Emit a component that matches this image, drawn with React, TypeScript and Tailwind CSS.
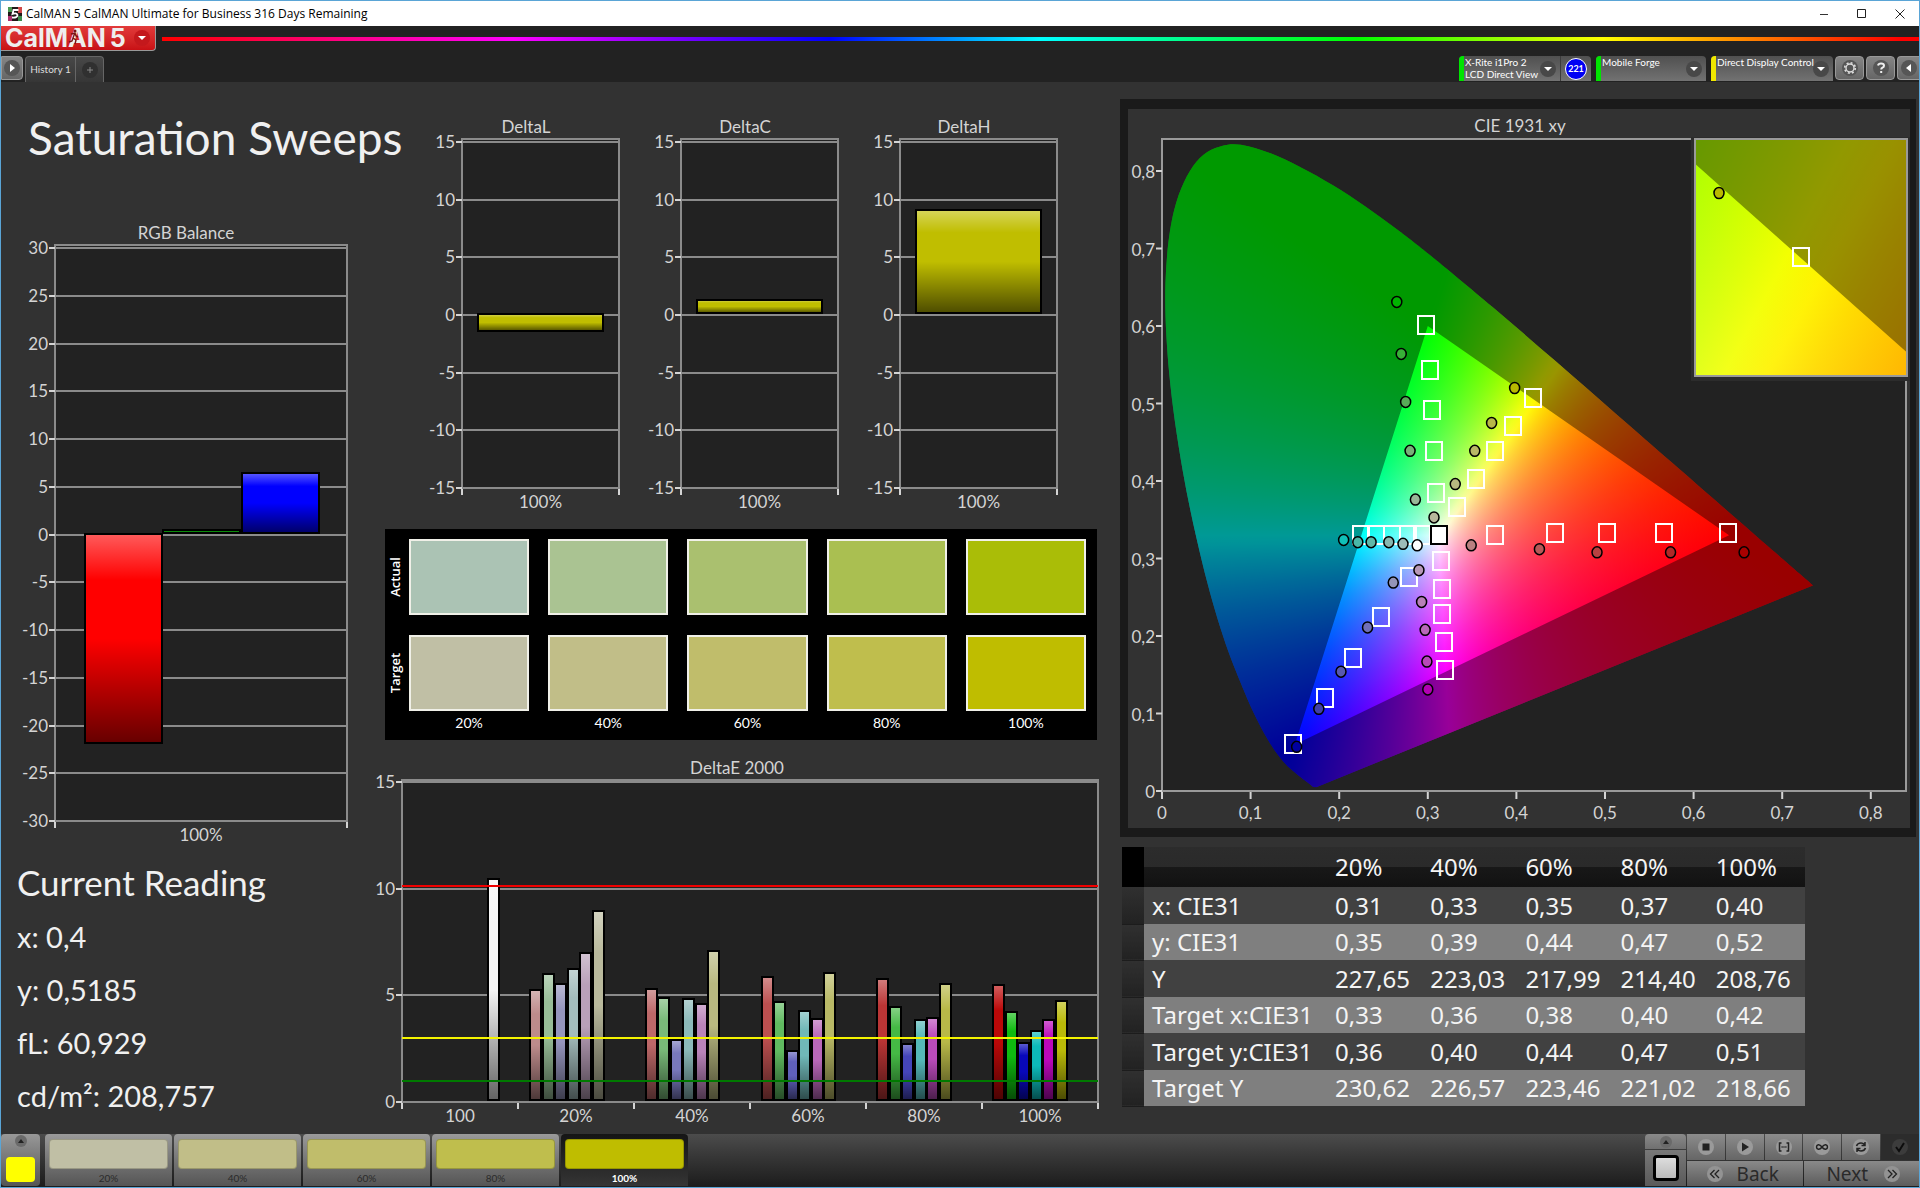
import type { ReactNode } from 'react';
import clsx from 'clsx';

type Point = [number, number];

type Bar = { x: number; width: number; value: number; color: string };

/* ---------- Measurement data ---------- */

const LEVELS = ['20%', '40%', '60%', '80%', '100%'];
const ACTUAL = ['#abc3b4', '#aac392', '#aac06f', '#aabf51', '#aabd07'];
const TARGET = ['#c0bfa5', '#c1be88', '#c0bd6b', '#bfbe4d', '#bfbd00'];

const READINGS = ['x: 0,4', 'y: 0,5185', 'fL: 60,929', 'cd/m²: 208,757'];

const TABLE_ROWS = [
  ['x: CIE31', '0,31', '0,33', '0,35', '0,37', '0,40'],
  ['y: CIE31', '0,35', '0,39', '0,44', '0,47', '0,52'],
  ['Y', '227,65', '223,03', '217,99', '214,40', '208,76'],
  ['Target x:CIE31', '0,33', '0,36', '0,38', '0,40', '0,42'],
  ['Target y:CIE31', '0,36', '0,40', '0,44', '0,47', '0,51'],
  ['Target Y', '230,62', '226,57', '223,46', '221,02', '218,66'],
];

const DELTA_E = [
  { values: [5.2, 5.95, 5.5, 6.2, 6.95, 8.9], colors: ['#bd8b8b', '#97bd97', '#9595bd', '#a3bcbc', '#b9a0b9', '#b9b99c'] },
  { values: [5.25, 4.85, 2.85, 4.8, 4.55, 7.05], colors: ['#bd6868', '#79ba79', '#7878bb', '#8cbaba', '#b983b9', '#b8b880'] },
  { values: [5.8, 4.65, 2.35, 4.2, 3.85, 6], colors: ['#bc4f4f', '#60ba60', '#6060bb', '#70b8b8', '#ba68ba', '#b9b966'] },
  { values: [5.7, 4.4, 2.65, 3.8, 3.9, 5.5], colors: ['#bb3535', '#45b945', '#4545ba', '#55b8b8', '#ba4bba', '#b8b848'] },
  { values: [5.45, 4.15, 2.7, 3.3, 3.8, 4.7], colors: ['#bb0808', '#0fba0f', '#0808ba', '#0dbaba', '#ba08ba', '#b9b908'] },
];

const TARGET_POINTS: Point[] = [
  [0.298, 0.601], [0.302, 0.543], [0.305, 0.492], [0.307, 0.439], [0.309, 0.385],
  [0.419, 0.507], [0.396, 0.471], [0.376, 0.439], [0.354, 0.403], [0.333, 0.366],
  [0.376, 0.33], [0.444, 0.333], [0.502, 0.333], [0.567, 0.333], [0.639, 0.333],
  [0.225, 0.33], [0.242, 0.33], [0.26, 0.33], [0.278, 0.33], [0.294, 0.33],
  [0.315, 0.297], [0.316, 0.261], [0.316, 0.228], [0.318, 0.192], [0.319, 0.156],
  [0.279, 0.276], [0.247, 0.225], [0.216, 0.172], [0.184, 0.12], [0.148, 0.061],
];

const MEASURED_POINTS: { points: Point[]; colors: string[] }[] = [
  { points: [[0.265, 0.631], [0.27, 0.564], [0.275, 0.502], [0.28, 0.439], [0.286, 0.376]], colors: ['#00b400', '#38b038', '#58ac58', '#78b078', '#98b898'] },
  { points: [[0.398, 0.52], [0.372, 0.475], [0.353, 0.439], [0.331, 0.396], [0.307, 0.353]], colors: ['#b9b900', '#b8b848', '#b8b866', '#b8b880', '#b8b89c'] },
  { points: [[0.205, 0.324], [0.221, 0.321], [0.236, 0.321], [0.256, 0.321], [0.272, 0.319]], colors: ['#10c0b8', '#48b8a8', '#60b8a8', '#88b8b0', '#9cbcb8'] },
  { points: [[0.288, 0.317]], colors: ['#ffffff'] },
  { points: [[0.349, 0.317], [0.426, 0.312], [0.491, 0.308], [0.574, 0.308], [0.657, 0.308]], colors: ['#b98080', '#b85858', '#b84040', '#b02828', '#a80000'] },
  { points: [[0.29, 0.285], [0.293, 0.244], [0.297, 0.208], [0.299, 0.167], [0.3, 0.131]], colors: ['#b898b8', '#b880b8', '#b868b8', '#b848b8', '#b400b4'] },
  { points: [[0.261, 0.269], [0.232, 0.211], [0.202, 0.154], [0.177, 0.106], [0.152, 0.057]], colors: ['#9494b8', '#7070b8', '#5858b0', '#4040a8', '#0000a0'] },
];

/* ---------- Chromaticity diagram maths ---------- */

const PRIMARIES: Point[] = [[0.64, 0.33], [0.3, 0.6], [0.15, 0.06]];

// Spectral locus, 380 - 700 nm
const LOCUS: Point[] = [
  [0.1741, 0.005], [0.1714, 0.0051], [0.1689, 0.0069], [0.1644, 0.0109], [0.1566, 0.0177],
  [0.144, 0.0297], [0.1355, 0.0399], [0.1241, 0.0578], [0.1096, 0.0868], [0.0913, 0.1327],
  [0.0687, 0.2007], [0.0454, 0.295], [0.0235, 0.4127], [0.0082, 0.5384], [0.0039, 0.6548],
  [0.0139, 0.7502], [0.0389, 0.812], [0.0743, 0.8338], [0.1142, 0.8262], [0.1547, 0.8059],
  [0.1929, 0.7816], [0.2296, 0.7543], [0.2658, 0.7243], [0.3016, 0.6923], [0.3731, 0.6245],
  [0.4441, 0.5547], [0.5125, 0.4866], [0.5752, 0.4242], [0.627, 0.3725], [0.6658, 0.334],
  [0.6915, 0.3083], [0.719, 0.2809], [0.7347, 0.2653],
];

const toLinearRgb = (x: number, y: number) => {
  const z = 1 - x - y;
  return [
    3.2406 * x - 1.5372 * y - 0.4986 * z,
    -0.9689 * x + 1.8758 * y + 0.0415 * z,
    0.0557 * x - 0.204 * y + 1.057 * z,
  ];
};

const channel = (a: number, b: number) => {
  if (a <= 0) return 0;
  if (b <= 0 || a >= b) return 255;
  return Math.round((255 * a) / b);
};

// The ratio of two channels is constant along any ray that leaves the third primary,
// so three conic gradients blended with "darken" give the full colour field.
function gamutBackground(px: (x: number) => number, py: (y: number) => number) {
  const sx = px(1) - px(0);
  const sy = py(0) - py(1);
  return PRIMARIES.map(([vx, vy], vertex) => {
    const i = (vertex + 1) % 3;
    const j = (vertex + 2) % 3;
    const stops: string[] = [];
    for (let deg = 0; deg <= 360; deg += 1) {
      const a = (deg * Math.PI) / 180;
      const rgb = toLinearRgb(vx + (Math.sin(a) / sx) * 10, vy + (Math.cos(a) / sy) * 10);
      const out = [255, 255, 255];
      out[i] = channel(rgb[i], rgb[j]);
      out[j] = channel(rgb[j], rgb[i]);
      stops.push(`rgb(${out.join(',')}) ${deg}deg`);
    }
    return `conic-gradient(at ${px(vx)}px ${py(vy)}px, ${stops.join(',')})`;
  }).join(',');
}

function smoothPath(points: Point[]) {
  let d = `M${points[0].join(' ')}`;
  for (let i = 0; i < points.length - 1; i++) {
    const p0 = points[Math.max(i - 1, 0)];
    const p1 = points[i];
    const p2 = points[i + 1];
    const p3 = points[Math.min(i + 2, points.length - 1)];
    d += `C${p1[0] + (p2[0] - p0[0]) / 6} ${p1[1] + (p2[1] - p0[1]) / 6} ${p2[0] - (p3[0] - p1[0]) / 6} ${p2[1] - (p3[1] - p1[1]) / 6} ${p2[0]} ${p2[1]}`;
  }
  return d + 'Z';
}

/* ---------- Charts ---------- */

type BarChartProps = {
  id: string;
  title: string;
  titleX: number;
  width: number;
  height: number;
  plot: { x: number; y: number; w: number; h: number };
  max: number;
  min: number;
  categories: string[];
  bars: Bar[];
  limits?: { value: number; color: string }[];
  headroom?: number;
};

function BarChart({ id, title, titleX, width, height, plot, max, min, categories, bars, limits = [], headroom = 3 }: BarChartProps) {
  const toY = (v: number) => Math.round(plot.y + ((max - v) / (max - min)) * plot.h);
  const ticks: number[] = [];
  for (let v = max; v >= min; v -= 5) ticks.push(v);
  const step = plot.w / categories.length;
  const zero = toY(0);

  return (
    <svg viewBox={`0 0 ${width} ${height}`} className="block w-full h-auto text-[17px]" role="img" aria-label={title}>
      <defs>
        <linearGradient id={id} x1="0" y1="0" x2="0" y2="1">
          <stop offset="0" stopColor="#fff" stopOpacity="0.36" />
          <stop offset="0.22" stopColor="#fff" stopOpacity="0" />
          <stop offset="0.5" stopColor="#000" stopOpacity="0" />
          <stop offset="1" stopColor="#000" stopOpacity="0.6" />
        </linearGradient>
      </defs>
      <text x={titleX} y={plot.y - headroom - 6} textAnchor="middle" fill="#d4d4d4">{title}</text>
      <rect x={plot.x} y={plot.y - headroom} width={plot.w} height={plot.h + headroom} fill="#222" stroke="#8b8b8b" strokeWidth="2" />
      {ticks.map((v) => (
        <g key={v}>
          <path d={`M${plot.x} ${toY(v)}H${plot.x + plot.w}`} stroke="#8b8b8b" strokeWidth="2" />
          <path d={`M${plot.x - 6} ${toY(v)}h6`} stroke="#d4d4d4" strokeWidth="2" />
          <text x={plot.x - 7} y={toY(v) + 6} textAnchor="end" fill="#d4d4d4">{v}</text>
        </g>
      ))}
      {bars.map((bar) => {
        const top = Math.min(toY(bar.value), zero) - 1;
        const h = Math.max(Math.abs(toY(bar.value) - zero), 3) - 1;
        return (
          <g key={bar.x}>
            <rect x={bar.x} y={top} width={bar.width} height={h} fill={bar.color} />
            <rect x={bar.x} y={top} width={bar.width} height={h} fill={`url(#${id})`} stroke="#000" strokeWidth="2" />
          </g>
        );
      })}
      {limits.map((limit) => (
        <path key={limit.value} d={`M${plot.x} ${toY(limit.value)}h${plot.w}`} stroke={limit.color} strokeWidth="2" />
      ))}
      {categories.map((c, i) => (
        <text key={c + i} x={plot.x + step * (i + 0.5)} y={plot.y + plot.h + 20} textAnchor="middle" fill="#d4d4d4">{c}</text>
      ))}
      {Array.from({ length: categories.length + 1 }, (_, i) => (
        <path key={i} d={`M${plot.x + step * i} ${plot.y + plot.h + 1}v6`} stroke="#d4d4d4" strokeWidth="2" />
      ))}
    </svg>
  );
}

function GamutField({ px, py, width, height }: { px: (x: number) => number; py: (y: number) => number; width: number; height: number }) {
  return (
    <foreignObject x="0" y="0" width={width} height={height}>
      <div className="w-full h-full bg-blend-darken" style={{ backgroundImage: gamutBackground(px, py) }} />
    </foreignObject>
  );
}

function CieChart() {
  const px = (x: number) => 34 + x * 886;
  const py = (y: number) => 682 - y * 775;
  const locus = smoothPath(LOCUS.map(([x, y]): Point => [px(x), py(y)]));
  const triangle = 'M' + PRIMARIES.map(([x, y]) => `${px(x)} ${py(y)}`).join('L') + 'Z';

  // Magnified view around the selected target
  const zx = (x: number) => 106 + (x - 0.4193) * 4080;
  const zy = (y: number) => 119 - (y - 0.5053) * 4577;
  const zoomTriangle = 'M' + PRIMARIES.map(([x, y]) => `${zx(x)} ${zy(y)}`).join('L') + 'Z';

  return (
    <svg viewBox="0 0 782 719" className="block w-full h-auto bg-[#323232] text-[17px]" role="img" aria-label="CIE 1931 xy">
      <defs>
        <clipPath id="locus">
          <path d={locus} />
        </clipPath>
      </defs>
      <text x="392" y="23" textAnchor="middle" fill="#d4d4d4">CIE 1931 xy</text>
      <rect x="34" y="30" width="744" height="652" fill="#222" stroke="#9a9a9a" strokeWidth="2" />
      <g clipPath="url(#locus)">
        <GamutField px={px} py={py} width={782} height={719} />
        <path d={`M0 0H782V719H0Z${triangle}`} fillRule="evenodd" fill="#000" fillOpacity="0.4" />
      </g>
      {TARGET_POINTS.map(([x, y]) => (
        <rect key={`${x}-${y}`} x={Math.round(px(x)) - 8} y={Math.round(py(y)) - 9} width="16" height="18" fill="none" stroke="#fff" strokeWidth="2" />
      ))}
      <rect x="303" y="417" width="16" height="18" fill="#fff" stroke="#000" strokeWidth="2" />
      {MEASURED_POINTS.map(({ points, colors }) =>
        points.map(([x, y], i) => (
          <ellipse key={`${x}-${y}`} cx={px(x)} cy={py(y)} rx="5" ry="5.5" fill={colors[i]} stroke="#000" strokeWidth="1.5" />
        ))
      )}
      {[0, 1, 2, 3, 4, 5, 6, 7, 8].map((n) => {
        const label = n === 0 ? '0' : `0,${n}`;
        return (
          <g key={n} fill="#d4d4d4">
            <path d={`M28 ${py(n / 10)}h6M${px(n / 10)} 683v7`} stroke="#d4d4d4" strokeWidth="2" />
            <text x="27" y={py(n / 10) + 7} textAnchor="end">{label}</text>
            <text x={px(n / 10)} y="710" textAnchor="middle">{label}</text>
          </g>
        );
      })}
      <rect x="563" y="28" width="219" height="244" fill="#2c2c2c" />
      <svg x="567" y="30" width="212" height="237" viewBox="0 0 212 237">
        <GamutField px={zx} py={zy} width={212} height={238} />
        <path d={`M0 0H212V238H0Z${zoomTriangle}`} fillRule="evenodd" fill="#000" fillOpacity="0.4" />
        <rect x="98" y="109" width="16" height="18" fill="none" stroke="#fff" strokeWidth="2" />
        <ellipse cx="24" cy="54" rx="5" ry="5.5" fill="#b9b900" stroke="#000" strokeWidth="1.5" />
      </svg>
      <rect x="567" y="30" width="212" height="237" fill="none" stroke="#9a9a9a" strokeWidth="2" />
    </svg>
  );
}

/* ---------- Window chrome ---------- */

function TitleBar() {
  return (
    <header className="flex h-[25px] items-center bg-white pl-[7px] text-black">
      <svg viewBox="0 0 14 14" className="h-[14px] w-[14px]">
        <path d="M0 0h14v14H0z" fill="#201818" />
        <path d="M0 0h4v5H0z" fill="#4a9a50" />
        <path d="M10 0h4v6h-4z" fill="#d04848" />
        <path d="M0 9h4v5H0z" fill="#b03070" />
        <path d="M10 9h4v5h-4z" fill="#3c8c4c" />
        <path d="M10.500 3H5.500L4.500 7Q8.500 5.500 9.500 8Q9.500 11 4 10.500" fill="none" stroke="#fff" strokeWidth="1.800" />
      </svg>
      <h1 className="ml-[4px] font-['Open_Sans',sans-serif] text-[12px] leading-4">
        CalMAN 5 CalMAN Ultimate for Business 316 Days Remaining
      </h1>
      <div className="ml-auto flex">
        <button aria-label="Minimize" className="flex h-6 w-[38px] items-center justify-center">
          <svg viewBox="0 0 10 10" className="h-[10px] w-[10px]"><path d="M1 5.500h8" stroke="#333" /></svg>
        </button>
        <button aria-label="Maximize" className="flex h-6 w-[38px] items-center justify-center">
          <svg viewBox="0 0 10 10" className="h-[10px] w-[10px]"><path d="M.5 .5h8v8h-8z" fill="none" stroke="#222" /></svg>
        </button>
        <button aria-label="Close" className="flex h-6 w-[38px] items-center justify-center">
          <svg viewBox="0 0 10 10" className="h-[10px] w-[10px]"><path d="M.5 .5l9 9M9.500 .5l-9 9" stroke="#222" /></svg>
        </button>
      </div>
    </header>
  );
}

function RoundIcon({ children, className }: { children: ReactNode; className?: string }) {
  return (
    <span className={clsx('flex h-4 w-4 shrink-0 items-center justify-center rounded-full', className)}>
      <svg viewBox="0 0 16 16" className="h-4 w-4">{children}</svg>
    </span>
  );
}

const DOWN = <path d="M4 6h8l-4 4z" fill="#fff" />;

function DeviceButton({ color, lines, className }: { color: string; lines: string[]; className?: string }) {
  return (
    <button aria-haspopup="menu" className={clsx('flex h-[25px] items-center overflow-hidden bg-linear-to-b from-[#505050] to-[#727272] text-left', className)}>
      <span className={clsx('h-full w-[5px] shrink-0', color)} />
      <span className="ml-px h-full min-w-0 flex-1 whitespace-nowrap text-[10px] leading-3 text-white">
        {lines.map((line) => <span key={line} className="block">{line}</span>)}
      </span>
      <RoundIcon className="mr-1 bg-[#484848]">{DOWN}</RoundIcon>
    </button>
  );
}

function SquareButton({ label, children, className }: { label: string; children: ReactNode; className?: string }) {
  return (
    <button aria-label={label} className={clsx('flex h-6 items-center justify-center border border-[#999] bg-linear-to-b from-[#858585] to-[#666]', className)}>
      <RoundIcon className="bg-[#565656]">{children}</RoundIcon>
    </button>
  );
}

function AppHeader() {
  return (
    <div className="flex h-14 flex-col justify-between bg-[#222]">
      <div className="flex items-start">
        <button aria-label="Main menu" className="relative flex h-[25px] w-[155px] shrink-0 items-center rounded-br-sm border-r border-b border-[#999] bg-linear-to-b from-[#e23a3a] to-[#c80f14] pl-1">
          <span className="font-['Inter',sans-serif] text-[25px] font-bold leading-6 text-[#eee]">CalMAN</span>
          <span className="ml-1 font-['Inter',sans-serif] text-[25px] font-bold leading-6 text-[#eee]">5</span>
          <svg viewBox="0 0 12 18" className="absolute left-[67px] top-[2px] h-[18px] w-3">
            <circle cx="7" cy="3" r="1.500" fill="#7a1414" />
            <path d="M3 6l4-1 1 3 2 1M6.500 6L5 10l3 2-1 4M5 10l-1 3-3 1" fill="none" stroke="#7a1414" strokeWidth="1.400" />
          </svg>
          <RoundIcon className="mr-[5px] ml-auto bg-[#c4181c]">{DOWN}</RoundIcon>
        </button>
        <div className="mt-[11px] ml-[6px] h-1 flex-1 bg-[linear-gradient(90deg,#f00_0%,#f0f_20%,#00f_38%,#0ff_50%,#0f0_68%,#ff0_82%,#f00_99%)]" />
      </div>
      <div className="flex items-start justify-between">
        <div className="flex">
          <SquareButton label="Show panel" className="w-[22px] rounded-r-sm">
            <path d="M6 4v8l5-4z" fill="#fff" />
          </SquareButton>
          <div className="ml-[2px] flex h-[26px] items-center rounded-t-sm border border-b-0 border-[#666] bg-linear-to-b from-[#484848] to-[#363636]">
            <button className="h-full w-[49px] text-center text-[10px] text-[#ddd]">History 1</button>
            <button aria-label="Add history" className="flex h-full w-7 items-center justify-center border-l border-[#666]">
              <RoundIcon className="bg-[#303030]"><path d="M8 5v6M5 8h6" stroke="#888" /></RoundIcon>
            </button>
          </div>
        </div>
        <div className="flex">
          <DeviceButton color="bg-[#00e400]" lines={['X-Rite i1Pro 2', 'LCD Direct View']} className="w-[101px] rounded-tl-sm" />
          <button className="mr-[5px] flex h-[25px] w-[31px] items-center justify-center rounded-tr-sm border-l border-[#3c3c3c] bg-linear-to-b from-[#505050] to-[#727272]">
            <span className="flex h-[22px] w-[22px] items-center justify-center rounded-full border border-white bg-[#0000f4] text-[9px] font-bold text-white">221</span>
          </button>
          <DeviceButton color="bg-[#00e400]" lines={['Mobile Forge']} className="mr-[5px] w-[110px] rounded-t-sm" />
          <DeviceButton color="bg-[#f0e800]" lines={['Direct Display Control']} className="mr-[2px] w-[122px] rounded-t-sm" />
          <SquareButton label="Settings" className="mr-[2px] w-[29px] rounded-sm">
            <circle cx="8" cy="8" r="4" fill="none" stroke="#ddd" strokeWidth="1.400" />
            <circle cx="8" cy="8" r="5.300" fill="none" stroke="#ddd" strokeWidth="1.600" strokeDasharray="2 2.160" />
          </SquareButton>
          <SquareButton label="Help" className="mr-[2px] w-[29px] rounded-sm">
            <path d="M5 5.500Q5.500 3.500 8 3.500Q11 3.500 11 5.700Q11 7 9.500 7.700Q8.200 8.300 8.200 9.500M8.200 11v2" fill="none" stroke="#eee" strokeWidth="2" />
          </SquareButton>
          <SquareButton label="Collapse" className="w-[22px] rounded-l-sm border-r-0">
            <path d="M10 4v8L5 8z" fill="#fff" />
          </SquareButton>
        </div>
      </div>
    </div>
  );
}

/* ---------- Panels ---------- */

function SwatchRow({ label, colors }: { label: string; colors: string[] }) {
  return (
    <div className="flex">
      <div className="flex w-6 items-center justify-center pr-1">
        <span className="-rotate-90 font-['Open_Sans',sans-serif] text-[13px] font-semibold leading-4 text-white">{label}</span>
      </div>
      <div className="grid flex-1 grid-cols-5 gap-[19px]">
        {colors.map((c) => <div key={c} className="h-[76px] border-2 border-[#f0f0e8]" style={{ backgroundColor: c }} />)}
      </div>
    </div>
  );
}

function Swatches() {
  return (
    <section className="mt-[11px] mr-[13px] ml-[15px] flex h-[211px] flex-col gap-5 bg-black pt-[10px] pr-[11px]">
      <SwatchRow label="Actual" colors={ACTUAL} />
      <div>
        <SwatchRow label="Target" colors={TARGET} />
        <div className="grid grid-cols-5 gap-[19px] pt-[2px] pl-6 text-center text-[14px] leading-5 text-white">
          {LEVELS.map((l) => <span key={l}>{l}</span>)}
        </div>
      </div>
    </section>
  );
}

function ResultsTable() {
  return (
    <table className="w-full table-fixed border-collapse text-left font-['Noto_Sans',sans-serif] text-[24px] leading-7 text-[#f4f4f4]">
      <colgroup>
        <col className="w-[22px]" />
        <col className="w-[185px]" />
        {LEVELS.map((l) => <col key={l} />)}
      </colgroup>
      <thead>
        <tr className="h-10 bg-[linear-gradient(#2c2c2c_0%,#2a2a2a_50%,#181818_50%,#121212_100%)]">
          <td className="bg-black" />
          <td />
          {LEVELS.map((l) => <th key={l} scope="col" className="pl-[6px] font-normal">{l}</th>)}
        </tr>
      </thead>
      <tbody>
        {TABLE_ROWS.map(([name, ...values], i) => (
          <tr key={name} className={clsx(i % 2 ? 'h-9 bg-[#7f7f7f]' : 'h-[37px] bg-[#414141]')}>
            <td className="border-b border-[#1c1c1c] bg-linear-to-b from-[#303030] to-[#222]" />
            <th scope="row" className="whitespace-nowrap pl-2 font-normal">{name}</th>
            {values.map((v, n) => <td key={n} className="pl-[6px]">{v}</td>)}
          </tr>
        ))}
      </tbody>
    </table>
  );
}

function UpArrow() {
  return (
    <span className="flex h-3 w-3 items-center justify-center rounded-full bg-[#6a6a6a]">
      <svg viewBox="0 0 12 12" className="h-3 w-3"><path d="M3 8h6L6 4z" fill="#222" /></svg>
    </span>
  );
}

const TRANSPORT: { label: string; icon: ReactNode }[] = [
  { label: 'Stop', icon: <path d="M4.500 4.500h7v7h-7z" fill="#222" /> },
  { label: 'Play', icon: <path d="M5 3.500v9l7-4.500z" fill="#222" /> },
  { label: 'Read series', icon: <path d="M5.500 4H3.500v8h2M10.500 4h2v8h-2M5.500 8h1.200M7.400 8h1.200M9.300 8h1.200" fill="none" stroke="#222" strokeWidth="1.500" /> },
  { label: 'Read continuously', icon: <path d="M8 8Q6 5.500 4.300 5.800Q2.500 6.200 2.500 8Q2.500 9.800 4.300 10.200Q6 10.500 8 8Q10 5.500 11.700 5.800Q13.500 6.200 13.500 8Q13.500 9.800 11.700 10.200Q10 10.500 8 8Z" fill="none" stroke="#222" strokeWidth="1.500" /> },
  { label: 'Refresh', icon: <path d="M3.500 7Q4.500 4 8 4Q10 4 11.500 5.500M12 3v3.500H8.500M12.500 9Q11.500 12 8 12Q6 12 4.500 10.500M4 13V9.500h3.500" fill="none" stroke="#222" strokeWidth="1.500" /> },
];

function BottomBar() {
  return (
    <footer className="flex h-[53px] items-stretch justify-between bg-linear-to-b from-[#4c4c4c] to-[#1c1c1c] pb-px">
      <div className="flex">
        <button aria-label="Current colour" className="mr-[5px] flex w-[39px] flex-col items-center rounded-sm bg-linear-to-b from-[#989898] to-[#555] pt-px">
          <UpArrow />
          <span className="mt-[10px] h-[25px] w-[29px] rounded-sm bg-[#ff0]" />
        </button>
        <div className="flex gap-[2px]">
          {LEVELS.map((level, i) => {
            const active = i === LEVELS.length - 1;
            return (
              <button
                key={level}
                className={clsx(
                  'flex w-[127px] flex-col items-center rounded-t-sm px-1 pt-[5px] text-[10px] leading-4',
                  active ? 'bg-linear-to-b from-[#151515] to-[#353535] font-bold text-white' : 'bg-linear-to-b from-[#9a9a9a] to-[#555] text-[#2a2a2a]'
                )}
              >
                <span className="mb-px h-[30px] w-full rounded-sm border border-black/20" style={{ backgroundColor: TARGET[i] }} />
                {level}
              </button>
            );
          })}
        </div>
      </div>
      <div className="flex gap-px text-[#2a2a2a]">
        <div className="flex w-[41px] flex-col gap-px">
          <button aria-label="Expand" className="flex h-[15px] items-center justify-center rounded-t-sm bg-linear-to-b from-[#8a8a8a] to-[#707070]"><UpArrow /></button>
          <button aria-label="Pattern window" className="flex flex-1 items-center justify-center bg-linear-to-b from-[#787878] to-[#5a5a5a]">
            <span className="h-[26px] w-[26px] rounded-sm border-3 border-black bg-linear-to-b from-[#ddd] to-[#bbb]" />
          </button>
        </div>
        <div className="flex w-[232px] flex-col gap-px">
          <div className="grid h-[26px] grid-cols-6 gap-px">
            {TRANSPORT.map(({ label, icon }) => (
              <button key={label} aria-label={label} className="flex items-center justify-center bg-linear-to-b from-[#8c8c8c] to-[#666]">
                <RoundIcon className="bg-[#9a9a9a]">{icon}</RoundIcon>
              </button>
            ))}
            <button aria-label="Accept" className="flex items-center justify-center bg-[#2c2c2c]">
              <RoundIcon className="bg-[#3c3c3c]"><path d="M4 8l3 4 5-8" fill="none" stroke="#0c0c0c" strokeWidth="2" /></RoundIcon>
            </button>
          </div>
          <div className="grid flex-1 grid-cols-2 gap-px font-['Noto_Sans',sans-serif] text-[19px] leading-6">
            <button className="flex items-center justify-center gap-[14px] bg-linear-to-b from-[#8a8a8a] to-[#5c5c5c] pr-1">
              <RoundIcon className="bg-[#939393]"><path d="M7.500 4l-4 4 4 4M12 4L8 8l4 4" fill="none" stroke="#222" strokeWidth="1.300" /></RoundIcon>
              Back
            </button>
            <button className="flex items-center justify-center gap-4 bg-linear-to-b from-[#8a8a8a] to-[#5c5c5c] pl-1">
              Next
              <RoundIcon className="bg-[#939393]"><path d="M4 4l4 4-4 4M8.500 4l4 4-4 4" fill="none" stroke="#222" strokeWidth="1.300" /></RoundIcon>
            </button>
          </div>
        </div>
      </div>
    </footer>
  );
}

export default function App() {
  const deltaPlot = { x: 58, y: 28, w: 157, h: 346 };
  const deltas = [
    { title: 'DeltaL', value: -1.6 },
    { title: 'DeltaC', value: 1.2 },
    { title: 'DeltaH', value: 9 },
  ];
  const deltaEBars: Bar[] = [
    { x: 118, width: 11, value: 10.4, color: '#f4f4f4' },
    ...DELTA_E.flatMap((group, g) =>
      group.values.map((value, i) => ({
        x: Math.round(160 + g * 115.8 + i * 12.5),
        width: 11,
        value,
        color: group.colors[i],
      }))
    ),
  ];

  return (
    <div className="flex min-h-screen flex-col border border-[#5aa5d6] bg-[#323232] font-['Lato',sans-serif]">
      <TitleBar />
      <AppHeader />
      <main className="grid flex-1 grid-cols-[369fr_740fr_809fr] items-start">
        <section className="min-w-0">
          <h2 className="mt-6 ml-[27px] whitespace-nowrap text-[46px] leading-[64px] text-[#f0f0f0]">Saturation Sweeps</h2>
          <div className="mt-[52px]">
            <BarChart
              id="rgb-gloss" title="RGB Balance" titleX={185} width={369} height={628}
              plot={{ x: 54, y: 26, w: 292, h: 573 }} max={30} min={-30} categories={['100%']}
              bars={[
                { x: 84, width: 77, value: -22, color: '#f00' },
                { x: 162, width: 77, value: 0.4, color: '#0a8a0a' },
                { x: 241, width: 77, value: 6.3, color: '#00f' },
              ]}
            />
          </div>
          <div className="mt-1 ml-4 whitespace-nowrap text-[#f0f0f0]">
            <h3 className="text-[35px] leading-[56px]">Current Reading</h3>
            {READINGS.map((r) => <p key={r} className="text-[29px] leading-[53px]">{r}</p>)}
          </div>
        </section>
        <section className="min-w-0">
          <div className="mt-8 mr-[49px] ml-[34px] grid grid-cols-3">
            {deltas.map(({ title, value }) => (
              <BarChart
                key={title} id={`${title}-gloss`} title={title} titleX={122} width={219} height={404}
                plot={deltaPlot} max={15} min={-15} categories={['100%']}
                bars={[{ x: 74, width: 125, value, color: '#c0be00' }]}
              />
            ))}
          </div>
          <Swatches />
          <div className="mt-[14px]">
            <BarChart
              id="de-gloss" title="DeltaE 2000" titleX={367} width={740} height={374}
              plot={{ x: 32, y: 28, w: 696, h: 320 }} max={15} min={0} headroom={2}
              categories={['100', ...LEVELS]} bars={deltaEBars}
              limits={[{ value: 10.12, color: '#f00000' }, { value: 3, color: '#f4f400' }, { value: 1, color: '#007a00' }]}
            />
          </div>
        </section>
        <section className="min-w-0">
          <div className="mt-[17px] mr-[3px] ml-[10px] bg-[#1a1a1a] pt-[10px] pr-[6px] pb-[9px] pl-2">
            <CieChart />
          </div>
          <div className="mt-[10px] mr-[114px] ml-3">
            <ResultsTable />
          </div>
        </section>
      </main>
      <BottomBar />
    </div>
  );
}
